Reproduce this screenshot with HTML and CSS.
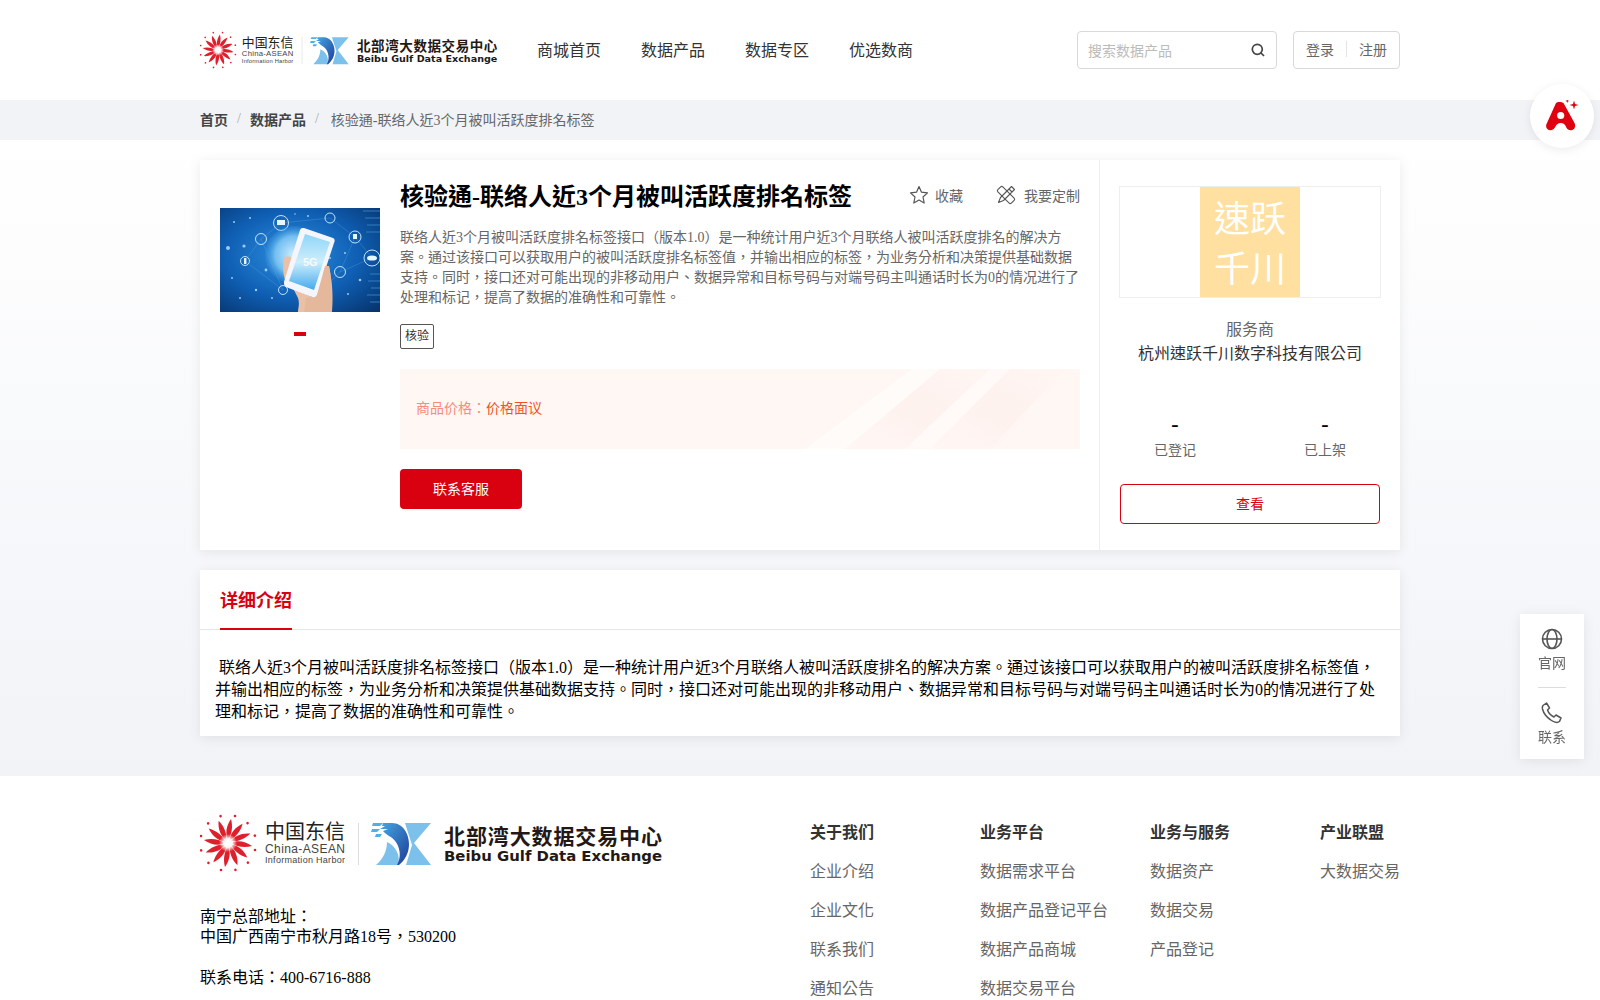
FILE: index.html
```html
<!DOCTYPE html>
<html lang="en">
<head>
    <meta charset="UTF-8">
    <title>核验通-联络人近3个月被叫活跃度排名标签</title>
    <link rel="stylesheet" href="styles.css">
</head>
<body>
    <svg class="defs" width="0" height="0">
        <defs>
            <linearGradient id="markBlue" x1="0" y1="0" x2="1" y2="1">
                <stop offset="0" stop-color="#45a8e4"/>
                <stop offset="1" stop-color="#1d3c98"/>
            </linearGradient>
            <radialGradient id="flowerCore">
                <stop offset="0" stop-color="#fff"/>
                <stop offset="0.5" stop-color="#fff" stop-opacity="0.9"/>
                <stop offset="1" stop-color="#fff" stop-opacity="0"/>
            </radialGradient>
            <g id="petal">
                <path d="M0 -3C-3 -9 -2 -17 3 -24C5 -17 4 -9 0 -3Z" fill="#df1f2b"/>
                <circle cx="7" cy="-27" r="1.300" fill="#df1f2b"/>
            </g>
            <g id="flower">
                <use href="#petal"/>
                <use href="#petal" transform="rotate(30)"/>
                <use href="#petal" transform="rotate(60)"/>
                <use href="#petal" transform="rotate(90)"/>
                <use href="#petal" transform="rotate(120)"/>
                <use href="#petal" transform="rotate(150)"/>
                <use href="#petal" transform="rotate(180)"/>
                <use href="#petal" transform="rotate(210)"/>
                <use href="#petal" transform="rotate(240)"/>
                <use href="#petal" transform="rotate(270)"/>
                <use href="#petal" transform="rotate(300)"/>
                <use href="#petal" transform="rotate(330)"/>
                <circle r="9" fill="url(#flowerCore)"/>
            </g>
            <g id="mark">
                <path d="M33 0H59L42 20L59 42H34L40 22Z" fill="#7cc0ec"/>
                <path d="M4 42C11 36 15 28 15 19C24 23 29 33 26 42Z" fill="#7cc0ec"/>
                <path d="M11 0H20C31 0 37 11 37 21C37 30 33 37 27 42H25C31 32 27 18 17 13C14 11 12 9 11 8L16 6H8L13 3H10Z" fill="url(#markBlue)"/>
                <path d="M1 0H11L8 3H0ZM0 6H8L5 9H-1ZM4 11H10L8 14H3Z" fill="#4fb0e4"/>
            </g>
            <g id="logoArt">
                <use href="#flower" transform="translate(28 31)"/>
                <text class="logo-cn" x="65" y="27" textLength="80">中国东信</text>
                <text class="logo-en" x="65" y="41" textLength="80">China-ASEAN</text>
                <text class="logo-sub" x="65" y="51" textLength="80">Information Harbor</text>
                <rect x="158" y="11" width="1" height="42" fill="#ddd"/>
                <use href="#mark" transform="translate(172 11)"/>
                <text class="logo-name" x="244" y="32" textLength="218">北部湾大数据交易中心</text>
                <text class="logo-name-en" x="244" y="49" textLength="218" lengthAdjust="spacingAndGlyphs">Beibu Gulf Data Exchange</text>
            </g>
        </defs>
    </svg>

    <header class="top">
        <div class="wrap top-in">
            <a class="logo logo-small">
                <svg viewBox="0 0 463 62" width="298" height="40"><use href="#logoArt"/></svg>
            </a>
            <nav class="nav">
                <a>商城首页</a>
                <a>数据产品</a>
                <a>数据专区</a>
                <a>优选数商</a>
            </nav>
            <div class="search">
                <span class="search-text">搜索数据产品</span>
                <svg viewBox="0 0 16 16" width="16" height="16" fill="none" stroke="#444" stroke-width="1.700">
                    <circle cx="7.300" cy="7.300" r="5"/>
                    <path d="M11 11l3 3"/>
                </svg>
            </div>
            <div class="auth">
                <a>登录</a>
                <i></i>
                <a>注册</a>
            </div>
        </div>
    </header>

    <div class="crumbs">
        <div class="wrap crumbs-in">
            <b>首页</b><span class="sep">/</span><b>数据产品</b><span class="sep sep-last">/</span><span>核验通-联络人近3个月被叫活跃度排名标签</span>
        </div>
    </div>

    <main class="main">
        <div class="wrap">
            <section class="card product">
                <div class="product-left">
                    <div class="gallery">
                        <svg class="photo" viewBox="0 0 160 104" width="160" height="104">
                            <defs>
                                <radialGradient id="sky" cx="0.45" cy="0.45" r="0.75">
                                    <stop offset="0" stop-color="#2f8fe0"/>
                                    <stop offset="0.55" stop-color="#0f5fb4"/>
                                    <stop offset="1" stop-color="#07356f"/>
                                </radialGradient>
                                <radialGradient id="globe">
                                    <stop offset="0" stop-color="#cfeeff"/>
                                    <stop offset="0.65" stop-color="#74bff0"/>
                                    <stop offset="1" stop-color="#3f9ae0" stop-opacity="0.2"/>
                                </radialGradient>
                                <linearGradient id="screen" x1="0" y1="0" x2="0" y2="1">
                                    <stop offset="0" stop-color="#8fd6f8"/>
                                    <stop offset="0.5" stop-color="#cdeefc"/>
                                    <stop offset="1" stop-color="#45aaec"/>
                                </linearGradient>
                            </defs>
                            <rect width="160" height="104" fill="url(#sky)"/>
                            <g fill="none" stroke="#6fbdf0" stroke-width="0.400" opacity="0.600">
                                <path d="M25 53L41 31L61 15L110 10L135 29L152 50L120 64L95 89M25 53L63 82L41 31M135 29L120 64"/>
                            </g>
                            <g fill="none" stroke="#2f7fc0" stroke-width="1">
                                <path d="M143 3H160M145 10H160M147 17H160M146 24H160M150 66H160M148 73H160M151 80H160M147 87H160M150 94H160"/>
                            </g>
                            <g fill="#bfe6ff" opacity="0.800">
                                <circle cx="14" cy="14" r="1"/><circle cx="24" cy="38" r="1.600"/><circle cx="12" cy="70" r="1"/>
                                <circle cx="36" cy="82" r="1.200"/><circle cx="52" cy="90" r="1"/><circle cx="88" cy="8" r="1"/>
                                <circle cx="128" cy="86" r="1"/><circle cx="140" cy="72" r="1.300"/><circle cx="46" cy="62" r="1.400"/>
                                <circle cx="30" cy="10" r="1"/><circle cx="125" cy="45" r="1"/><circle cx="8" cy="40" r="2"/>
                                <circle cx="20" cy="90" r="1"/><circle cx="75" cy="6" r="0.800"/><circle cx="110" cy="50" r="1"/>
                            </g>
                            <g stroke="#d5efff" fill="none" stroke-width="0.900">
                                <circle cx="61" cy="15" r="7.500"/><circle cx="110" cy="10" r="5"/><circle cx="135" cy="29" r="6"/>
                                <circle cx="152" cy="50" r="8"/><circle cx="120" cy="64" r="5.500"/><circle cx="41" cy="31" r="5.500"/>
                                <circle cx="25" cy="53" r="4.500"/><circle cx="63" cy="82" r="4.500"/>
                            </g>
                            <g fill="#e8f6ff">
                                <rect x="57" y="12" width="8" height="5"/><rect x="133" y="26" width="4" height="5"/>
                                <ellipse cx="152" cy="50" rx="5" ry="2.600"/><rect x="24" y="50" width="2.400" height="6"/>
                            </g>
                            <circle cx="74" cy="47" r="29" fill="url(#globe)"/>
                            <path d="M64 50C66 48 70 48 72 50L72 78L78 90C80 96 78 100 78 104H112C113 90 113 78 109 58L92 89L68 78C64 72 62 62 64 50Z" fill="#eac0a6"/>
                            <path d="M84 20L113 30C115 31 115 33 114 35L97 87C96 89 94 90 92 89L66 79C64 78 64 76 64 74L80 22C81 20 82 20 84 20Z" fill="#f4f6fb"/>
                            <path d="M85 26L110 34L94 82L69 73Z" fill="url(#screen)"/>
                            <path d="M105 58L109 58C112 72 112 90 112 104H84L86 90L92 89C94 90 96 89 97 87Z" fill="#e5b89c"/>
                            <text class="photo-text" x="83" y="58">5G</text>
                        </svg>
                        <span class="dot"></span>
                    </div>
                    <div class="info">
                        <div class="info-head">
                            <h1>核验通-联络人近3个月被叫活跃度排名标签</h1>
                            <div class="actions">
                                <span class="act">
                                    <svg viewBox="0 0 20 20" width="20" height="20" fill="none" stroke="#555" stroke-width="1.200" stroke-linejoin="round">
                                        <path d="M10 1.600l2.500 5.600 6 .7-4.500 4.100 1.200 6L10 15.100l-5.200 2.900 1.200-6L1.500 7.900l6-.7z"/>
                                    </svg>
                                    收藏
                                </span>
                                <span class="act act-edit">
                                    <svg viewBox="0 0 20 20" width="20" height="20" fill="none" stroke="#555" stroke-width="1.100" stroke-linejoin="round">
                                        <rect x="-3.500" y="-9.500" width="7" height="19" rx="1.500" transform="translate(10 10) rotate(-45)"/>
                                        <path d="M15.500 1.500l3 3-11 11-5 2 2-5zM13 4l3 3"/>
                                    </svg>
                                    我要定制
                                </span>
                            </div>
                        </div>
                        <p class="desc">联络人近3个月被叫活跃度排名标签接口（版本1.0）是一种统计用户近3个月联络人被叫活跃度排名的解决方案。通过该接口可以获取用户的被叫活跃度排名标签值，并输出相应的标签，为业务分析和决策提供基础数据支持。同时，接口还对可能出现的非移动用户、数据异常和目标号码与对端号码主叫通话时长为0的情况进行了处理和标记，提高了数据的准确性和可靠性。</p>
                        <span class="tag">核验</span>
                        <div class="price">
                            <svg class="streaks" viewBox="0 0 680 80" preserveAspectRatio="none">
                                <defs>
                                    <linearGradient id="streak" x1="0" y1="1" x2="1" y2="0">
                                        <stop offset="0" stop-color="#fde9e6" stop-opacity="0"/>
                                        <stop offset="0.5" stop-color="#fde9e6" stop-opacity="0.400"/>
                                        <stop offset="1" stop-color="#fde9e6" stop-opacity="0.100"/>
                                    </linearGradient>
                                </defs>
                                <path d="M405 80L512 0H540L445 80Z" fill="#fffdfb" opacity="0.600"/>
                                <path d="M445 80L540 0H590L505 80Z" fill="url(#streak)"/>
                                <path d="M505 80L590 0H610L530 80Z" fill="#fffcfa" opacity="0.600"/>
                                <path d="M530 80L610 0H665L590 80Z" fill="url(#streak)"/>
                            </svg>
                            <span class="price-label">商品价格：</span><span class="price-val">价格面议</span>
                        </div>
                        <a class="btn-red">联系客服</a>
                    </div>
                </div>
                <aside class="vendor">
                    <div class="vendor-logo">
                        <div class="vendor-mark">速跃<br>千川</div>
                    </div>
                    <div class="vendor-role">服务商</div>
                    <div class="vendor-name">杭州速跃千川数字科技有限公司</div>
                    <div class="stats">
                        <div class="stat"><b>-</b><span>已登记</span></div>
                        <div class="stat"><b>-</b><span>已上架</span></div>
                    </div>
                    <a class="btn-line">查看</a>
                </aside>
            </section>

            <section class="card detail">
                <div class="detail-tabs"><span class="detail-tab">详细介绍</span></div>
                <p class="detail-text">&nbsp;联络人近3个月被叫活跃度排名标签接口（版本1.0）是一种统计用户近3个月联络人被叫活跃度排名的解决方案。通过该接口可以获取用户的被叫活跃度排名标签值，并输出相应的标签，为业务分析和决策提供基础数据支持。同时，接口还对可能出现的非移动用户、数据异常和目标号码与对端号码主叫通话时长为0的情况进行了处理和标记，提高了数据的准确性和可靠性。</p>
            </section>
        </div>
    </main>

    <footer class="foot">
        <div class="wrap foot-in">
            <div class="foot-left">
                <svg class="foot-logo" viewBox="0 0 463 62" width="463" height="62"><use href="#logoArt"/></svg>
                <p>南宁总部地址：<br>中国广西南宁市秋月路18号，530200</p>
                <p>联系电话：400-6716-888</p>
            </div>
            <div class="foot-cols">
                <div class="foot-col">
                    <h4>关于我们</h4>
                    <a>企业介绍</a>
                    <a>企业文化</a>
                    <a>联系我们</a>
                    <a>通知公告</a>
                </div>
                <div class="foot-col">
                    <h4>业务平台</h4>
                    <a>数据需求平台</a>
                    <a>数据产品登记平台</a>
                    <a>数据产品商城</a>
                    <a>数据交易平台</a>
                </div>
                <div class="foot-col">
                    <h4>业务与服务</h4>
                    <a>数据资产</a>
                    <a>数据交易</a>
                    <a>产品登记</a>
                </div>
                <div class="foot-col">
                    <h4>产业联盟</h4>
                    <a>大数据交易</a>
                </div>
            </div>
        </div>
    </footer>

    <div class="ai-btn">
        <svg viewBox="0 0 34 32" width="34" height="32">
            <path d="M11 3C12 1.500 17 1.500 18.500 3L29.500 23C32 28 27 32 23 29.500C20 27 21 23 15.700 23C10.500 23 11.500 27 8 29.500C4 32 -1 28 2 23Z" fill="#e0000f"/>
            <circle cx="15.700" cy="15.500" r="3.600" fill="#fff"/>
            <path d="M29 0.500L30 4 33.500 5 30 6 29 9.500 28 6 24.500 5 28 4Z" fill="#e0000f"/>
            <path d="M22.300 -1L22.800 .5 24.300 1 22.800 1.500 22.300 3 21.800 1.500 20.300 1 21.800 .5Z" fill="#e0000f"/>
        </svg>
    </div>

    <div class="side">
        <a class="side-item">
            <svg viewBox="0 0 22 22" width="22" height="22" fill="none" stroke="#555" stroke-width="1.600">
                <circle cx="11" cy="11" r="9.500"/>
                <ellipse cx="11" cy="11" rx="5" ry="9.500"/>
                <path d="M1.500 11h19"/>
            </svg>
            官网
        </a>
        <i class="side-line"></i>
        <a class="side-item">
            <svg viewBox="0 0 22 22" width="22" height="22" fill="none" stroke="#555" stroke-width="1.500" stroke-linejoin="round">
                <path d="M2 3.500L5.500 1l3 5-2 2c1 3 3.500 5.500 6.500 7l2-2 5 3-1.500 3.500c-2 1.500-5 1-8-1-4.500-3-8-7.500-9-11.500C1.200 5.500 1.300 4.500 2 3.500z"/>
            </svg>
            联系
        </a>
    </div>
</body>
</html>
```

FILE: styles.css
```css
html {
    scrollbar-width: none;
}
body {
    margin: 0;
    font-family: "Liberation Serif", "Noto Sans CJK TC", serif;
    color: #000;
    background: #fff;
}
a {
    color: inherit;
    text-decoration: none;
}
.defs {
    position: absolute;
}
.wrap {
    width: 1200px;
    margin: 0 auto;
}

/* header */
.top {
    height: 100px;
    background: #fff;
}
.top-in {
    display: flex;
    align-items: center;
    height: 100px;
}
.logo {
    display: flex;
}
.nav {
    display: flex;
    gap: 40px;
    margin: 0 0 2px 39px;
    font-size: 16px;
    color: #333;
}
.search {
    display: flex;
    align-items: center;
    justify-content: space-between;
    box-sizing: border-box;
    width: 200px;
    height: 38px;
    margin-left: auto;
    padding: 0 10px 1px;
    border: 1px solid #d9d9d9;
    border-radius: 4px;
    font-size: 14px;
    color: #bbb;
}
.auth {
    display: flex;
    align-items: center;
    box-sizing: border-box;
    height: 38px;
    margin-left: 16px;
    padding: 0 12px 3px;
    border: 1px solid #d9d9d9;
    border-radius: 4px;
    font-size: 14px;
    color: #666;
}
.auth i {
    width: 1px;
    height: 16px;
    margin: 0 12px;
    background: #e5e5e5;
}
.crumbs {
    height: 40px;
    background: #f1f3f7;
}
.crumbs-in {
    display: flex;
    align-items: center;
    box-sizing: border-box;
    height: 40px;
    padding-bottom: 2px;
    font-size: 14px;
    color: #666;
}
.crumbs b {
    color: #444;
}
.sep {
    margin: 0 9px;
    color: #aaa;
}
.sep-last {
    margin-right: 12px;
}

/* main */
.main {
    padding: 20px 0 40px;
    background: linear-gradient(to bottom, #fff, #f1f3f7);
}
.card {
    background: #fff;
    box-shadow: 0 2px 12px rgba(0, 0, 0, 0.08);
}
.product {
    display: flex;
    height: 390px;
}
.product-left {
    display: flex;
    box-sizing: border-box;
    width: 900px;
    padding-right: 19px;
    border-right: 1px solid #eee;
}
.gallery {
    display: flex;
    flex-direction: column;
    align-items: center;
    width: 160px;
    margin: 48px 20px 0;
}
.photo {
    display: block;
}
.dot {
    width: 12px;
    height: 4px;
    margin-top: 20px;
    background: #d9000f;
}
.info {
    flex: 1;
    min-width: 0;
}
.info-head {
    display: flex;
    align-items: center;
    justify-content: space-between;
    height: 36px;
    margin-top: 16px;
}
.info-head h1 {
    margin: 0;
    font-size: 24px;
    font-weight: bold;
    white-space: nowrap;
}
.actions {
    display: flex;
    gap: 33px;
    margin-top: 2px;
    font-size: 14px;
    color: #666;
}
.act {
    display: flex;
    align-items: center;
    gap: 6px;
}
.act-edit {
    gap: 8px;
}
.desc {
    margin: 16px 0 0;
    font-size: 14px;
    line-height: 20px;
    color: #666;
}
.tag {
    display: inline-block;
    box-sizing: border-box;
    height: 25px;
    margin-top: 16px;
    padding: 0 4px;
    border: 1px solid #555;
    border-radius: 2px;
    font-size: 12px;
    line-height: 23px;
    color: #333;
}
.price {
    position: relative;
    display: flex;
    align-items: center;
    box-sizing: border-box;
    height: 80px;
    margin-top: 20px;
    padding: 0 0 4px 16px;
    font-size: 14px;
    background: #fff7f4;
}
.streaks {
    position: absolute;
    top: 0;
    left: 0;
    width: 100%;
    height: 100%;
}
.price-label {
    position: relative;
    color: #f98a7c;
}
.price-val {
    position: relative;
    color: #f4511e;
}
.btn-red {
    display: block;
    width: 122px;
    height: 40px;
    margin-top: 20px;
    border-radius: 4px;
    font-size: 14px;
    line-height: 42px;
    text-align: center;
    color: #fff;
    background: #d9000f;
}

/* vendor */
.vendor {
    box-sizing: border-box;
    width: 300px;
    padding: 26px 19px 0;
    text-align: center;
}
.vendor-logo {
    display: flex;
    justify-content: center;
    height: 110px;
    border: 1px solid #eee;
}
.vendor-mark {
    box-sizing: border-box;
    width: 100px;
    padding-top: 8px;
    font-size: 36px;
    line-height: 50px;
    color: #fff;
    background: #ffe0a0;
}
.vendor-role {
    margin-top: 20px;
    font-size: 16px;
    line-height: 24px;
    color: #666;
}
.vendor-name {
    font-size: 16px;
    line-height: 24px;
    color: #333;
}
.stats {
    display: flex;
    margin: 45px -19px 0;
}
.stat {
    flex: 1;
}
.stat b {
    display: block;
    font-size: 22px;
    line-height: 26px;
}
.stat span {
    display: block;
    margin-top: 4px;
    font-size: 14px;
    line-height: 20px;
    color: #666;
}
.btn-line {
    display: block;
    box-sizing: border-box;
    width: 260px;
    height: 40px;
    margin: 23px auto 0;
    border: 1px solid #d9000f;
    border-radius: 4px;
    font-size: 14px;
    line-height: 40px;
    color: #d9000f;
}

/* detail */
.detail {
    margin-top: 20px;
}
.detail-tabs {
    box-sizing: border-box;
    height: 60px;
    padding-left: 20px;
    border-bottom: 1px solid #e5e5e5;
}
.detail-tab {
    display: inline-block;
    box-sizing: border-box;
    height: 60px;
    border-bottom: 2px solid #d9000f;
    font-size: 18px;
    font-weight: bold;
    line-height: 62px;
    color: #d9000f;
}
.detail-text {
    margin: 0;
    padding: 27px 25px 13px 15px;
    font-size: 16px;
    line-height: 22px;
}

/* footer */
.foot {
    padding: 38px 0 60px;
    background: #fff;
}
.foot-in {
    display: flex;
    justify-content: space-between;
}
.foot-logo {
    display: block;
    margin-top: -2px;
}
.foot-left p {
    margin: 21px 0 0;
    font-size: 16px;
    line-height: 20px;
}
.foot-left p:first-of-type {
    margin-top: 33px;
}
.foot-cols {
    display: flex;
}
.foot-col {
    display: flex;
    flex-direction: column;
    width: 170px;
    font-size: 16px;
    line-height: 24px;
    color: #666;
}
.foot-col:last-child {
    width: 80px;
}
.foot-col h4 {
    margin: 7px 0 0;
    font-size: 16px;
    color: #333;
}
.foot-col a {
    margin-top: 15px;
    white-space: nowrap;
}

/* floating */
.ai-btn {
    position: fixed;
    top: 84px;
    right: 6px;
    display: flex;
    align-items: center;
    justify-content: center;
    width: 64px;
    height: 64px;
    border-radius: 50%;
    background: #fff;
    box-shadow: 0 2px 10px rgba(0, 0, 0, 0.08);
}
.side {
    position: fixed;
    top: 614px;
    right: 16px;
    display: flex;
    flex-direction: column;
    align-items: center;
    width: 64px;
    height: 145px;
    background: #fff;
    box-shadow: 0 2px 12px rgba(0, 0, 0, 0.08);
}
.side-item {
    display: flex;
    flex-direction: column;
    align-items: center;
    gap: 4px;
    margin-top: 14px;
    font-size: 14px;
    line-height: 20px;
    color: #666;
}
.side-line {
    width: 28px;
    height: 1px;
    margin-top: 13px;
    background: #ddd;
}

/* logo text inside the svg */
.logo-cn {
    font-family: "Noto Sans CJK SC", sans-serif;
    font-size: 20px;
    fill: #222;
}
.logo-en {
    font-family: "Liberation Sans", sans-serif;
    font-size: 12px;
    fill: #444;
}
.logo-sub {
    font-family: "Liberation Sans", sans-serif;
    font-size: 9px;
    fill: #444;
}
.logo-name {
    font-family: "Noto Sans CJK SC", sans-serif;
    font-size: 21px;
    font-weight: 700;
    fill: #231815;
}
.logo-name-en {
    font-family: "DejaVu Sans", sans-serif;
    font-size: 14px;
    font-weight: 700;
    fill: #231815;
}
.photo-text {
    font-family: "Liberation Sans", sans-serif;
    font-size: 11px;
    font-weight: 700;
    fill: #fff;
    opacity: 0.8;
}
```
